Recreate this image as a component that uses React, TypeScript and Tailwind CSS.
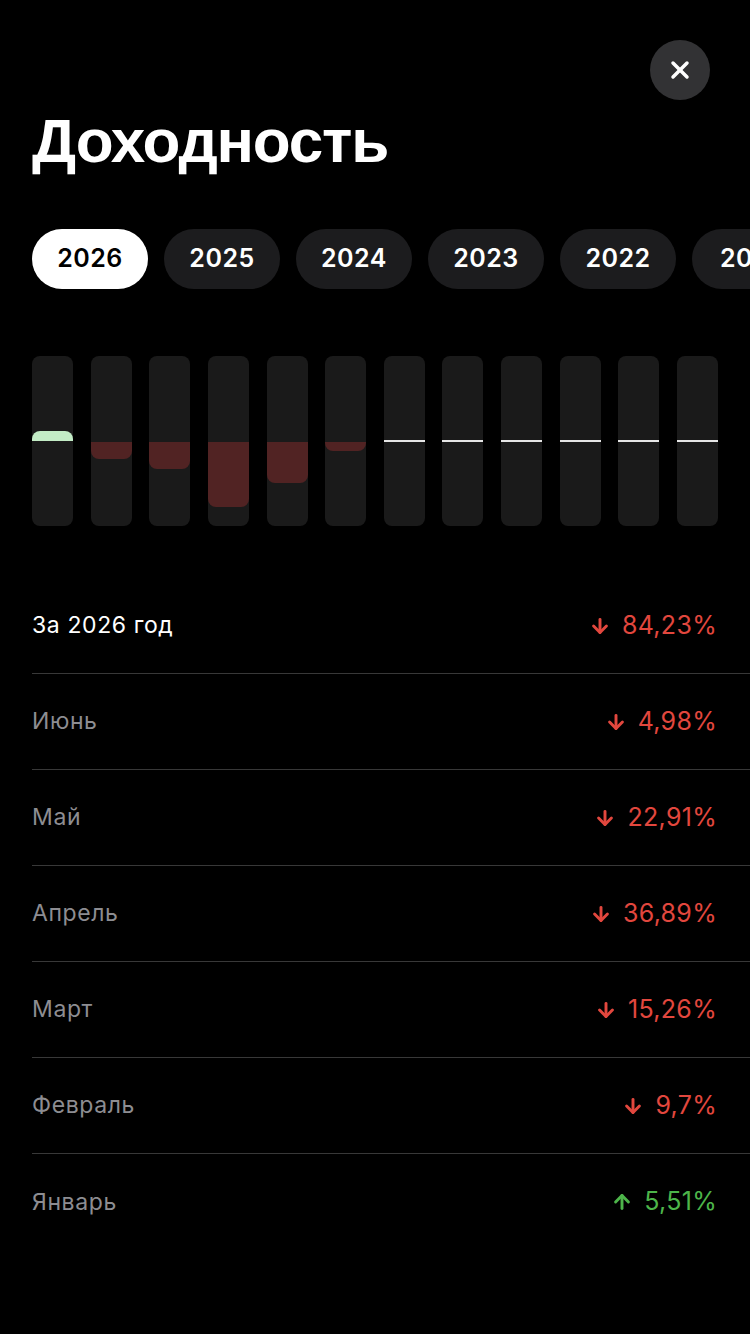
import { ArrowDown, ArrowUp, X } from "lucide-react";

const years = [2026, 2025, 2024, 2023, 2022, 2021, 2020];

// value in % per month, null = no data yet
const bars: (number | null)[] = [5.51, -9.7, -15.26, -36.89, -22.91, -4.98, null, null, null, null, null, null];

const rows = [
  { label: "Июнь", value: "4,98%", up: false },
  { label: "Май", value: "22,91%", up: false },
  { label: "Апрель", value: "36,89%", up: false },
  { label: "Март", value: "15,26%", up: false },
  { label: "Февраль", value: "9,7%", up: false },
  { label: "Январь", value: "5,51%", up: true },
];

const SCALE = 1.77;

const Bar = ({ v }: { v: number | null }) => (
  <div className="relative w-[41px] h-[170px] rounded-lg bg-[#1a1a1a] overflow-hidden">
    {v === null ? (
      <div className="absolute left-0 right-0 top-[84px] h-[2px] bg-[#e6e6e6]" />
    ) : v >= 0 ? (
      <div
        className="absolute left-0 right-0 bottom-[85px] rounded-t-lg bg-[#c3ecc6]"
        style={{ height: Math.max(v * SCALE, 8) }}
      />
    ) : (
      <div
        className="absolute left-0 right-0 top-[86px] rounded-b-lg bg-[#512323]"
        style={{ height: Math.max(-v * SCALE, 8) }}
      />
    )}
  </div>
);

const Row = ({
  label,
  value,
  up,
  main,
  last,
}: {
  label: string;
  value: string;
  up: boolean;
  main?: boolean;
  last?: boolean;
}) => (
  <div className={`h-[96px] flex items-center justify-between pr-[33px] ${last ? "" : "border-b border-[#383838]"}`}>
    <span className={`text-[23px] tracking-[0.6px] ${main ? "text-white" : "text-[#8d8d92]"}`}>{label}</span>
    <span className={`flex items-center gap-[11px] text-[25px] tracking-[0.3px] ${up ? "text-[#4db54a]" : "text-[#e2473e]"}`}>
      {up ? <ArrowUp size={22} strokeWidth={3.2} /> : <ArrowDown size={22} strokeWidth={3.2} />}
      {value}
    </span>
  </div>
);

export default function App() {
  return (
    <div className="min-h-[1334px] bg-black text-white font-['Inter','Noto_Sans',sans-serif] overflow-hidden">
      <div className="flex justify-end pt-10 pr-10">
        <button className="w-[60px] h-[60px] rounded-full bg-[#323234] flex items-center justify-center text-white">
          <X size={28} strokeWidth={3} />
        </button>
      </div>

      <h1 className="mt-[10px] pl-8 text-[62px] leading-none font-bold tracking-[-1.2px] font-['Liberation_Sans','Arial',sans-serif]">
        Доходность
      </h1>

      <div className="mt-[57px] pl-8 flex gap-4 overflow-hidden">
        {years.map((y, i) => (
          <div
            key={y}
            className={`shrink-0 w-[116px] h-[60px] rounded-full flex items-center justify-center text-[25px] font-semibold tracking-[0.5px] ${
              i === 0 ? "bg-white text-black" : "bg-[#1c1c1e] text-white"
            }`}
          >
            {y}
          </div>
        ))}
      </div>

      <div className="mt-[67px] mx-8 flex justify-between">
        {bars.map((v, i) => (
          <Bar key={i} v={v} />
        ))}
      </div>

      <div className="mt-[52px] pl-8">
        <Row label="За 2026 год" value="84,23%" up={false} main />
        {rows.map((r, i) => (
          <Row key={r.label} {...r} last={i === rows.length - 1} />
        ))}
      </div>
    </div>
  );
}
